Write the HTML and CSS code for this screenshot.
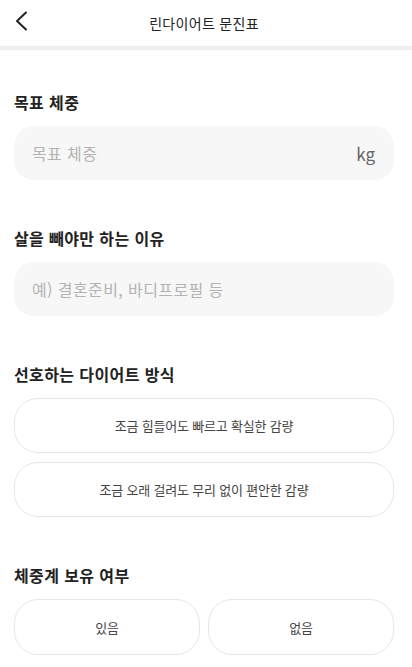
FILE: index.html
```html
<!DOCTYPE html>
<html lang="ko">
<head>
    <meta charset="UTF-8">
    <meta name="viewport" content="width=device-width, initial-scale=1.0">
    <title>린다이어트 문진표</title>
    <link rel="stylesheet" href="styles.css">
</head>
<body>
    <header class="top-bar">
        <button class="back-btn" aria-label="뒤로">
            <svg width="14" height="20" viewBox="0 0 14 20">
                <path d="M12 1.5 L3 10 L12 18.5" fill="none" stroke="#222" stroke-width="2" stroke-linecap="round" stroke-linejoin="round"/>
            </svg>
        </button>
        <h1 class="top-title">린다이어트 문진표</h1>
    </header>
    <div class="divider"></div>

    <main class="form">
        <section class="field">
            <h2 class="field-title">목표 체중</h2>
            <div class="input-box">
                <input type="text" placeholder="목표 체중">
                <span class="unit">kg</span>
            </div>
        </section>

        <section class="field">
            <h2 class="field-title">살을 빼야만 하는 이유</h2>
            <div class="input-box">
                <input type="text" placeholder="예) 결혼준비, 바디프로필 등">
            </div>
        </section>

        <section class="field">
            <h2 class="field-title">선호하는 다이어트 방식</h2>
            <div class="options">
                <button class="option">조금 힘들어도 빠르고 확실한 감량</button>
                <button class="option">조금 오래 걸려도 무리 없이 편안한 감량</button>
            </div>
        </section>

        <section class="field">
            <h2 class="field-title">체중계 보유 여부</h2>
            <div class="options-row">
                <button class="option">있음</button>
                <button class="option">없음</button>
            </div>
        </section>
    </main>
</body>
</html>
```

FILE: styles.css
```css
body {
    margin: 0;
    background: #fff;
    font-family: "Noto Sans CJK KR", "Noto Sans", sans-serif;
    color: #222;
}
.top-bar {
    height: 46px;
    display: flex;
    align-items: center;
    justify-content: center;
    padding-right: 4px;
    position: relative;
}
.back-btn {
    position: absolute;
    left: 14px;
    top: 11px;
    padding: 0;
    border: none;
    background: none;
    display: flex;
}
.top-title {
    margin: 0;
    font-size: 14px;
    font-weight: 400;
    letter-spacing: 0.3px;
    color: #222;
}
.divider {
    height: 4px;
    background: #efefef;
}
.form {
    padding: 40px 18px 0 14px;
}
.field + .field {
    margin-top: 46px;
}
.field-title {
    margin: 0 0 12px;
    font-size: 16px;
    line-height: 24px;
    font-weight: 700;
    letter-spacing: 0.4px;
    color: #222;
}
.input-box {
    height: 54px;
    background: #f7f7f7;
    border-radius: 20px;
    display: flex;
    align-items: center;
    padding: 0 19px 0 18px;
}
.input-box input {
    flex: 1;
    min-width: 0;
    border: none;
    background: none;
    outline: none;
    padding: 0;
    font-family: inherit;
    font-size: 16px;
    letter-spacing: 0.4px;
    color: #222;
}
.input-box input::placeholder {
    color: #b3b3b3;
}
.unit {
    font-size: 17px;
    color: #666;
}
.options {
    display: flex;
    flex-direction: column;
    gap: 9px;
}
.options-row {
    display: grid;
    grid-template-columns: 1fr 1fr;
    gap: 8px;
}
.option {
    height: 55px;
    border: 1px solid #e6e6e6;
    border-radius: 24px;
    background: #fff;
    font-family: inherit;
    font-size: 13px;
    letter-spacing: -0.2px;
    color: #444;
    cursor: pointer;
}
.options-row .option {
    height: 56px;
}
```
